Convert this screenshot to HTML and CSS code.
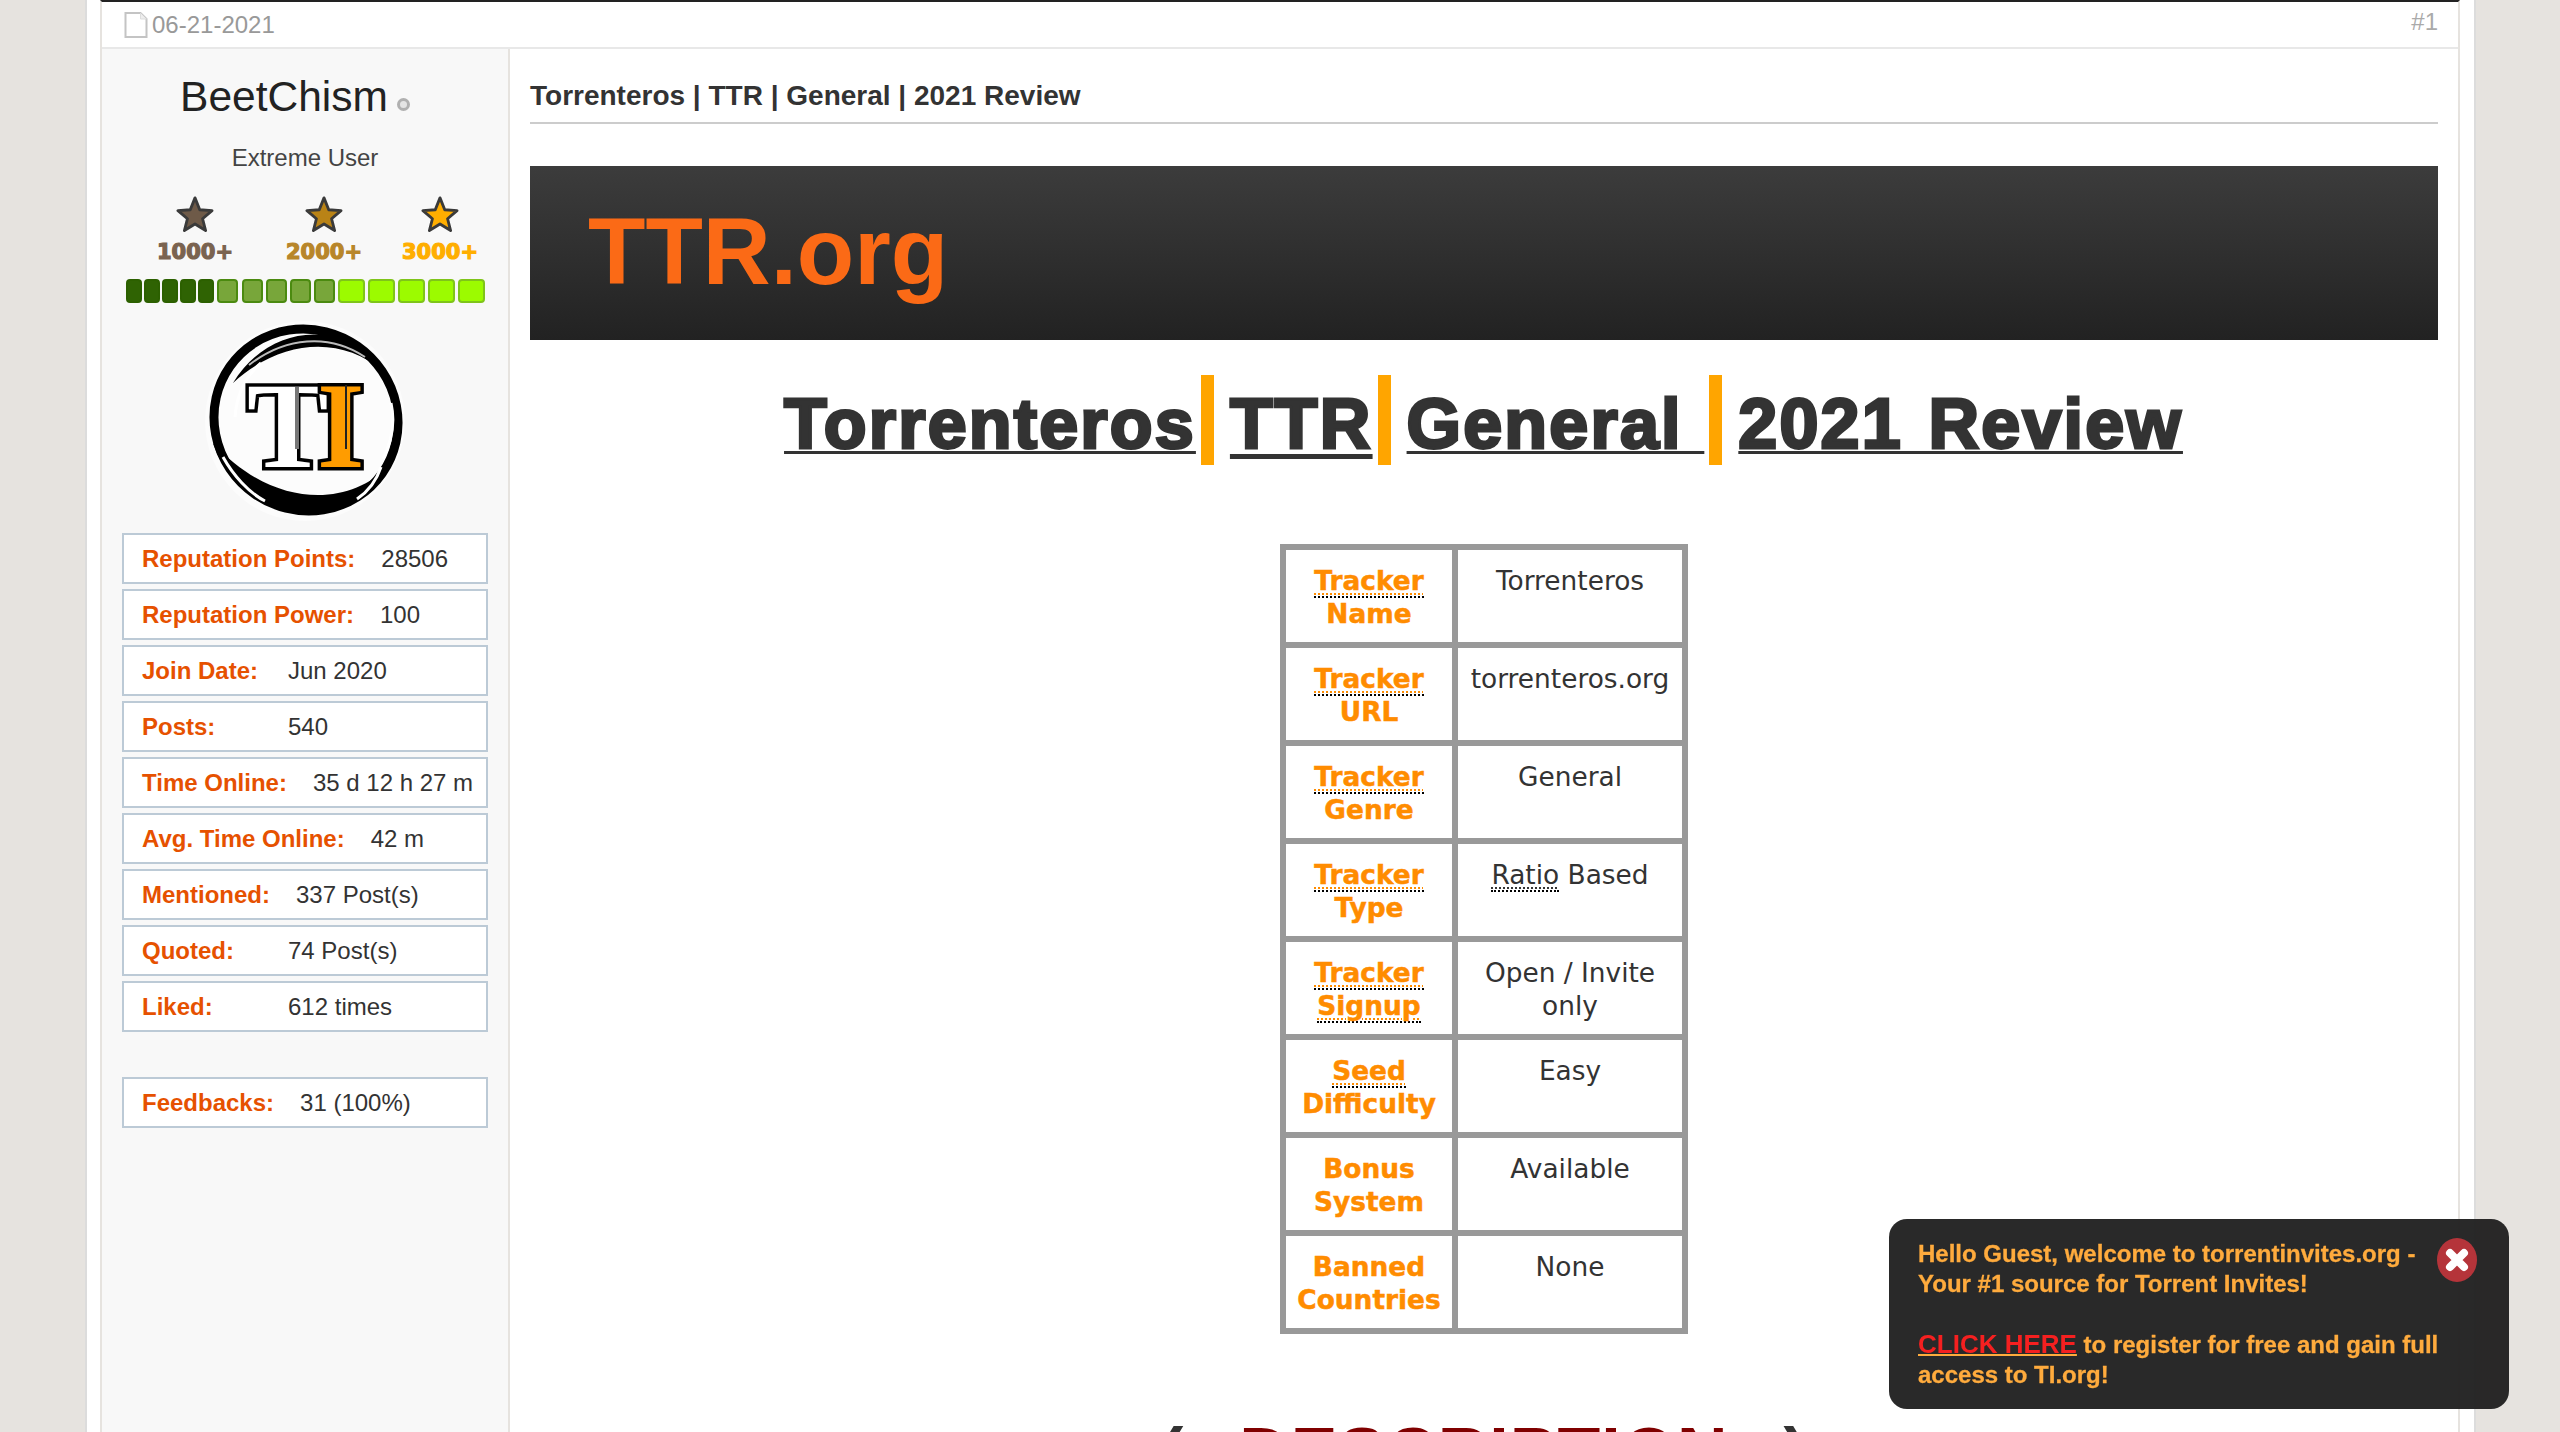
FILE: index.html
```html
<!DOCTYPE html>
<html lang="en">
<head>
    <meta charset="UTF-8">
    <title>Torrenteros | TTR | General | 2021 Review</title>
    <link rel="stylesheet" href="styles.css">
</head>
<body>
    <div class="page">
        <div class="post">
            <div class="post-head">
                <div class="post-date">
                    <svg class="file-icon" viewBox="0 0 24 26" width="24" height="26">
                        <path d="M1.5 1h15l6 6v18h-21z" fill="#fff" stroke="#c4c4c4" stroke-width="2"/>
                        <path d="M16.5 1v6h6" fill="#eee" stroke="#ddd" stroke-width="1"/>
                    </svg>
                    <span>06-21-2021</span>
                </div>
                <span class="post-num">#1</span>
            </div>
            <div class="post-body">
                <div class="user-col">
                    <div class="user-name">BeetChism<span class="status-dot"></span></div>
                    <div class="user-title">Extreme User</div>
                    <div class="awards">
                        <div class="award award-1">
                            <svg viewBox="0 0 40 38" width="38" height="36"><path d="M20 2l5 12.500 13 1-10 8.500 3.200 12.500-11.200-7-11.200 7 3.200-12.500-10-8.500 13-1z" stroke="#3a3a3a" stroke-width="3" stroke-linejoin="round"/></svg>
                            <span>1000+</span>
                        </div>
                        <div class="award award-2">
                            <svg viewBox="0 0 40 38" width="38" height="36"><path d="M20 2l5 12.500 13 1-10 8.500 3.200 12.500-11.200-7-11.200 7 3.200-12.500-10-8.500 13-1z" stroke="#3a3a3a" stroke-width="3" stroke-linejoin="round"/></svg>
                            <span>2000+</span>
                        </div>
                        <div class="award award-3">
                            <svg viewBox="0 0 40 38" width="38" height="36"><path d="M20 2l5 12.500 13 1-10 8.500 3.200 12.500-11.200-7-11.200 7 3.200-12.500-10-8.500 13-1z" stroke="#3a3a3a" stroke-width="3" stroke-linejoin="round"/></svg>
                            <span>3000+</span>
                        </div>
                    </div>
                    <div class="rep-bar">
                        <i class="pip pip-dark"></i><i class="pip pip-dark"></i><i class="pip pip-dark"></i><i class="pip pip-dark"></i><i class="pip pip-dark"></i>
                        <i class="pip pip-mid"></i><i class="pip pip-mid"></i><i class="pip pip-mid"></i><i class="pip pip-mid"></i><i class="pip pip-mid"></i>
                        <i class="pip pip-lime"></i><i class="pip pip-lime"></i><i class="pip pip-lime"></i><i class="pip pip-lime"></i><i class="pip pip-lime"></i>
                    </div>
                    <svg class="avatar" viewBox="0 0 200 200" width="200" height="200">
                        <circle cx="100" cy="100" r="100" fill="#fff" opacity=".55"/>
                        <ellipse cx="101" cy="99" rx="93" ry="90" transform="rotate(35 101 99)" fill="none" stroke="#000" stroke-width="9"/>
                        <path d="M28 62C62 6 135 -6 178 50C136 14 76 18 28 62Z" fill="#000"/>
                        <path d="M8 122C36 204 138 218 182 146C146 184 70 190 8 122Z" fill="#000"/>
                        <path d="M44 44C80 16 124 12 160 36" fill="none" stroke="#bbb" stroke-width="2"/>
                        <path d="M18 136C28 154 44 172 60 180M186 82C190 100 188 118 178 138M30 96C32 70 42 54 56 42M176 146C172 158 164 170 152 178" fill="none" stroke="#fff" stroke-width="3"/>
                        <text class="logo-t" x="42" y="146">T</text>
                        <text class="logo-i" x="112" y="146">I</text>
                        <path class="logo-shade" d="M92 66V128"/>
                        <path class="logo-line" d="M141 64V128"/>
                    </svg>
                    <div class="stat"><b>Reputation Points:</b><span>28506</span></div>
                    <div class="stat"><b>Reputation Power:</b><span>100</span></div>
                    <div class="stat"><b>Join Date:</b><span>Jun 2020</span></div>
                    <div class="stat"><b>Posts:</b><span>540</span></div>
                    <div class="stat"><b>Time Online:</b><span>35 d 12 h 27 m</span></div>
                    <div class="stat"><b>Avg. Time Online:</b><span>42 m</span></div>
                    <div class="stat"><b>Mentioned:</b><span>337 Post(s)</span></div>
                    <div class="stat"><b>Quoted:</b><span>74 Post(s)</span></div>
                    <div class="stat"><b>Liked:</b><span>612 times</span></div>
                    <div class="stat stat-feedback"><b>Feedbacks:</b><span>31 (100%)</span></div>
                </div>
                <div class="post-content">
                    <h2 class="post-title">Torrenteros | TTR | General | 2021 Review</h2>
                    <div class="banner">TTR.org</div>
                    <div class="big-head">
                        <u class="head-word">Torrenteros</u><i class="head-bar"></i>
                        <u class="head-word head-word-low">TTR</u><i class="head-bar"></i>
                        <u class="head-word">General&nbsp;</u><i class="head-bar"></i>
                        <u class="head-word head-word-last">2021 Review</u>
                    </div>
                    <table class="tracker-table">
                        <tr><th><abbr>Tracker</abbr><br>Name</th><td>Torrenteros</td></tr>
                        <tr><th><abbr>Tracker</abbr><br>URL</th><td>torrenteros.org</td></tr>
                        <tr><th><abbr>Tracker</abbr><br>Genre</th><td>General</td></tr>
                        <tr><th><abbr>Tracker</abbr><br>Type</th><td><abbr>Ratio</abbr> Based</td></tr>
                        <tr><th><abbr>Tracker</abbr><br><abbr>Signup</abbr></th><td>Open / Invite only</td></tr>
                        <tr><th><abbr>Seed</abbr><br>Difficulty</th><td>Easy</td></tr>
                        <tr><th>Bonus<br>System</th><td>Available</td></tr>
                        <tr><th>Banned<br>Countries</th><td>None</td></tr>
                    </table>
                    <div class="desc-head">(&nbsp;&nbsp;<span>DESCRIPTION</span>&nbsp;&nbsp;)</div>
                </div>
            </div>
        </div>
    </div>

    <div class="guest-box">
        <svg class="guest-close" viewBox="0 0 44 44" width="44" height="44">
            <ellipse cx="22" cy="22" rx="20" ry="22" fill="#b5343a"/>
            <path d="M15 15l14 14M29 15l-14 14" stroke="#fff" stroke-width="8" stroke-linecap="round"/>
        </svg>
        <p>Hello Guest, welcome to torrentinvites.org - Your #1 source for Torrent Invites!</p>
        <p><a class="guest-link"><span>CLICK HERE</span></a> to register for free and gain full access to TI.org!</p>
    </div>
</body>
</html>
```

FILE: styles.css
```css
html, body {
    height: 100%;
    margin: 0;
    overflow: hidden;
}
body {
    background-color: #e6e3df;
    color: #333;
    font-family: 'Liberation Sans', Arial, sans-serif;
    font-size: 24px;
}
.page {
    box-sizing: border-box;
    width: 2391px;
    height: 100%;
    margin-left: 85px;
    padding: 0 14px 0 13px;
    background-color: #fff;
    border-left: 2px solid #dcdcdc;
    border-right: 2px solid #dcdcdc;
}
.post {
    box-sizing: border-box;
    height: 100%;
    border-top: 2px solid #222;
    border-left: 2px solid #e6e3df;
    border-right: 2px solid #e6e3df;
    display: flex;
    flex-direction: column;
}
.post-head {
    display: flex;
    justify-content: space-between;
    align-items: center;
    height: 45px;
    padding: 0 20px 0 22px;
    border-bottom: 2px solid #e8e8e8;
    color: #999;
    flex: none;
}
.post-date {
    display: flex;
    align-items: center;
    gap: 4px;
}
.post-num {
    color: #aaa;
    margin-top: -6px;
}
.post-body {
    display: flex;
    flex: 1;
}

/* user column */
.user-col {
    box-sizing: border-box;
    width: 408px;
    padding: 0 20px;
    background-color: #f8f8f8;
    border-right: 2px solid #e6e3df;
    flex: none;
    display: flex;
    flex-direction: column;
}
.user-name {
    margin-top: 23px;
    margin-right: 20px;
    font-size: 42.500px;
    line-height: 50px;
    color: #222;
    text-align: center;
}
.status-dot {
    display: inline-block;
    box-sizing: border-box;
    width: 13px;
    height: 13px;
    margin-left: 9px;
    border: 3px solid #b0b0b0;
    border-radius: 50%;
    background-color: #e4e4e4;
}
.user-title {
    margin-top: 19px;
    color: #444;
    text-align: center;
    line-height: 34px;
}
.awards {
    display: flex;
    margin-top: 21px;
    height: 72px;
    position: relative;
}
.award {
    display: flex;
    flex-direction: column;
    align-items: center;
    gap: 6px;
    width: 80px;
    font-family: 'DejaVu Sans', sans-serif;
    font-weight: bold;
    font-size: 21px;
    line-height: 28px;
    -webkit-text-stroke: 1.200px currentColor;
}
.award-1 { margin-left: 33px; color: #7a6350; fill: #6e5a48; }
.award-2 { margin-left: 49px; color: #b8862a; fill: #b98316; }
.award-3 { margin-left: 36px; color: #ffae00; fill: #ffae00; }
.rep-bar {
    display: flex;
    height: 24px;
    margin-top: 11px;
    margin-left: 4px;
    gap: 2px;
}
.pip {
    box-sizing: border-box;
    border-radius: 4px;
    border: 2px solid #2c6000;
    flex: none;
}
.pip-dark { width: 16px; background-color: #2f6303; }
.pip-mid { width: 21px; margin-left: 1.300px; background-color: #78a63a; border-color: #4b8a10; }
.pip-lime { width: 27px; margin-left: 1px; background-color: #9cfb00; border-color: #7fc41a; }
.avatar {
    display: block;
    margin: 18px auto 0;
}
.logo-t, .logo-i {
    font-family: 'Liberation Serif', serif;
    font-weight: bold;
    font-size: 122px;
    stroke: #000;
    stroke-width: 7px;
    paint-order: stroke;
}
.logo-t { fill: #fff; }
.logo-i { fill: #ff9c00; }
.logo-shade {
    stroke: #777;
    stroke-width: 4px;
}
.logo-line {
    stroke: #222;
    stroke-width: 2px;
}
.stat {
    box-sizing: border-box;
    display: flex;
    align-items: center;
    height: 51px;
    margin-bottom: 5px;
    padding-left: 18px;
    width: 366px;
    background-color: #fff;
    border: 2px solid #bccad6;
    white-space: nowrap;
}
.stat b {
    min-width: 120px;
    margin-right: 26px;
    color: #e65100;
}
.stat-feedback {
    margin-top: 40px;
}
.avatar + .stat {
    margin-top: 12px;
}

/* main post */
.post-content {
    box-sizing: border-box;
    flex: 1;
    min-width: 0;
    padding: 0 20px;
}
.post-title {
    margin: 0;
    height: 75px;
    padding-top: 29px;
    box-sizing: border-box;
    border-bottom: 2px solid #ccc;
    font-size: 28px;
    line-height: 36px;
    color: #333;
}
.banner {
    box-sizing: border-box;
    height: 174px;
    margin-top: 42px;
    padding-left: 58px;
    background-image: linear-gradient(#3c3c3c, #222);
    color: #fb6a16;
    font-size: 94px;
    font-weight: bold;
    line-height: 172px;
}
.big-head {
    display: flex;
    justify-content: center;
    align-items: center;
    margin-top: 34px;
    height: 92px;
    padding-left: 4px;
    font-size: 70px;
    font-weight: bold;
    letter-spacing: 2.200px;
    color: #333;
    -webkit-text-stroke: 3px #333;
    white-space: nowrap;
}
.head-word {
    padding-top: 8px;
    text-decoration-thickness: 3px;
    text-underline-offset: 3px;
    margin-right: 5px;
}
.head-word-low {
    text-decoration-thickness: 5px;
    text-underline-offset: 6px;
}
.head-word-last {
    word-spacing: 4px;
}
.head-bar {
    width: 13px;
    height: 90px;
    margin-right: 16px;
    background-color: #ffa500;
}
.tracker-table {
    border-collapse: collapse;
    width: 408px;
    margin: 78px auto 0;
    table-layout: fixed;
    font-family: 'DejaVu Sans', sans-serif;
    font-size: 26.400px;
    line-height: 33px;
}
.tracker-table th, .tracker-table td {
    border: 6px solid #999;
    padding: 14px 10px 0;
    box-sizing: content-box;
    height: 78px;
    vertical-align: top;
    text-align: center;
}
.tracker-table th {
    width: 146px;
    color: #ff8c00;
    font-weight: bold;
    -webkit-text-stroke: .5px #ff8c00;
}
.tracker-table abbr {
    text-decoration: underline dotted 2px;
    text-underline-offset: 3px;
    border-bottom: 2px dotted #000;
}
.desc-head {
    margin-top: 79px;
    text-align: center;
    font-size: 70px;
    font-weight: bold;
    letter-spacing: 1px;
    line-height: 80px;
    color: #333;
    white-space: nowrap;
}
.desc-head span {
    color: #800000;
    margin: 0 14px;
}

/* guest popup */
.guest-box {
    position: fixed;
    right: 51px;
    bottom: 23px;
    box-sizing: border-box;
    width: 620px;
    height: 190px;
    padding: 20px 66px 0 29px;
    background-color: rgba(34, 34, 34, .97);
    border-radius: 18px;
    color: #ffab3d;
    font-weight: bold;
    line-height: 30px;
    -webkit-text-stroke: .3px #ffab3d;
}
.guest-box p {
    margin: 0 0 30px;
}
.guest-close {
    position: absolute;
    top: 19px;
    right: 30px;
}
.guest-link {
    text-decoration: underline;
    text-decoration-thickness: 2px;
}
.guest-link span {
    color: #f52020;
    font-size: 26px;
    -webkit-text-stroke: 0;
}
```
